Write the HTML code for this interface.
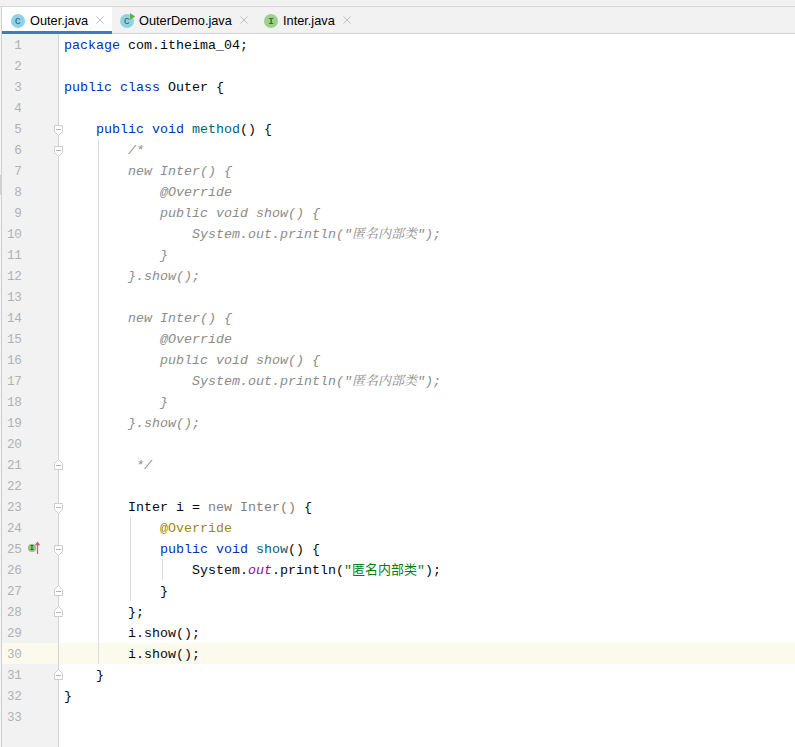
<!DOCTYPE html>
<html lang="zh">
<head>
<meta charset="utf-8">
<title>Outer.java</title>
<style>
html,body{margin:0;padding:0;}
body{width:795px;height:747px;overflow:hidden;background:#fff;position:relative;
  font-family:"Liberation Sans","Noto Sans CJK SC",sans-serif;}
#top{position:absolute;left:0;top:0;width:795px;height:6px;background:#f2f2f2;}
#topline{position:absolute;left:0;top:6px;width:795px;height:1px;background:#d4d4d4;}
#tabs{position:absolute;left:0;top:7px;width:795px;height:26px;background:#f2f2f2;}
#tabline{position:absolute;left:0;top:33px;width:795px;height:1px;background:#d4d4d4;}
#leftedge{position:absolute;left:0;top:7px;width:1px;height:740px;background:#f5f5f5;}
#leftmark{position:absolute;left:0;top:175px;width:1px;height:20px;background:#d2d2d2;}
#leftline{position:absolute;left:1px;top:7px;width:1px;height:740px;background:#cfcfcf;}
.tab{position:absolute;top:0;height:26px;font-size:12.75px;line-height:26px;color:#000;white-space:nowrap;}
.tab.active{background:#fff;left:2px;width:110px;}
.tab.active:after{content:"";position:absolute;left:0;right:0;top:24px;height:3px;background:#3a7cc7;}
.tab svg{position:absolute;top:6px;}
.tab .lbl{position:absolute;top:1px;}
.tab .x{position:absolute;top:9px;width:8px;height:8px;}
#gutter{position:absolute;left:2px;top:34px;width:56px;height:713px;background:#f2f2f2;}
#gutterline{position:absolute;left:58px;top:34px;width:1px;height:713px;background:#d4d4d4;}
#caret{position:absolute;left:2px;top:643px;width:793px;height:21px;background:#fcfaed;}
.ln{position:absolute;left:0;width:21.5px;height:21px;line-height:21px;margin-top:2px;text-align:right;font-family:"Liberation Mono",monospace;font-size:12.6px;letter-spacing:-0.36px;color:#b1b1b1;white-space:pre;}
.cl{position:absolute;left:64px;margin-top:1px;height:21px;line-height:21px;font-family:"Liberation Mono","Noto Sans CJK SC",monospace;font-size:13.3312px;color:#080808;white-space:pre;}
.k{color:#0033b3;}
.m{color:#00627a;}
.c{color:#8c8c8c;font-style:italic;}
.a{color:#9e880d;}
.s{color:#067d17;}
.f{color:#871094;font-style:italic;}
.u{color:#808080;}
.zh{font-family:"Noto Sans CJK SC",sans-serif;font-size:13px;line-height:0;}
.zhc{font-family:"Noto Serif CJK SC",serif;font-size:13px;font-style:italic;line-height:0;}
.guide{position:absolute;width:1px;background:#dcdcdc;}
.fold{position:absolute;left:54px;width:9px;height:11px;}
</style>
</head>
<body>
<div id="top"></div>
<div id="topline"></div>
<div id="tabline"></div>
<div id="tabs">
  <div class="tab active">
    <svg style="left:8px" width="16" height="16" viewBox="0 0 16 16"><circle cx="8" cy="8" r="7" fill="#8fd2e8"/><text x="7.8" y="11.2" text-anchor="middle" font-family="Liberation Sans,sans-serif" font-size="11" fill="#47585f">c</text></svg>
    <span class="lbl" style="left:28px">Outer.java</span>
    <svg class="x" style="left:94px" viewBox="0 0 8 8"><path d="M0.5 0.5L7.5 7.5M7.5 0.5L0.5 7.5" stroke="#bac0c3" stroke-width="1" fill="none"/></svg>
  </div>
  <div class="tab" style="left:112px;width:144px">
    <svg style="left:7px" width="17" height="16" viewBox="0 0 17 16"><circle cx="8" cy="8" r="7" fill="#8fd2e8"/><text x="7.8" y="11.2" text-anchor="middle" font-family="Liberation Sans,sans-serif" font-size="11" fill="#47585f">c</text><path d="M11 0L16.2 3.5L11 7Z" fill="#5fb63c"/></svg>
    <span class="lbl" style="left:27px">OuterDemo.java</span>
    <svg class="x" style="left:128px" viewBox="0 0 8 8"><path d="M0.5 0.5L7.5 7.5M7.5 0.5L0.5 7.5" stroke="#bac0c3" stroke-width="1" fill="none"/></svg>
  </div>
  <div class="tab" style="left:256px;width:110px">
    <svg style="left:7px" width="16" height="16" viewBox="0 0 16 16"><circle cx="8" cy="8" r="7" fill="#9bd288"/><text x="8" y="11" text-anchor="middle" font-family="Liberation Mono,monospace" font-size="9.5" font-weight="bold" fill="#4a6640">I</text></svg>
    <span class="lbl" style="left:27px">Inter.java</span>
    <svg class="x" style="left:87px" viewBox="0 0 8 8"><path d="M0.5 0.5L7.5 7.5M7.5 0.5L0.5 7.5" stroke="#bac0c3" stroke-width="1" fill="none"/></svg>
  </div>
</div>
<div id="leftedge"></div>
<div id="leftmark"></div>
<div id="leftline"></div>
<div id="gutter"></div>
<div id="caret"></div>
<div id="gutterline"></div>
<div id="code">
<div class="ln" style="top:34px">1</div>
<div class="cl" style="top:34px"><span class="k">package</span> com.itheima_04;</div>
<div class="ln" style="top:55px">2</div>
<div class="ln" style="top:76px">3</div>
<div class="cl" style="top:76px"><span class="k">public class</span> Outer {</div>
<div class="ln" style="top:97px">4</div>
<div class="ln" style="top:118px">5</div>
<div class="cl" style="top:118px">    <span class="k">public void</span> <span class="m">method</span>() {</div>
<div class="ln" style="top:139px">6</div>
<div class="cl" style="top:139px">        <span class="c">/*</span></div>
<div class="ln" style="top:160px">7</div>
<div class="cl" style="top:160px">        <span class="c">new Inter() {</span></div>
<div class="ln" style="top:181px">8</div>
<div class="cl" style="top:181px">        <span class="c">    @Override</span></div>
<div class="ln" style="top:202px">9</div>
<div class="cl" style="top:202px">        <span class="c">    public void show() {</span></div>
<div class="ln" style="top:223px">10</div>
<div class="cl" style="top:223px">        <span class="c">        System.out.println("<span class="zhc">匿名内部类</span>");</span></div>
<div class="ln" style="top:244px">11</div>
<div class="cl" style="top:244px">        <span class="c">    }</span></div>
<div class="ln" style="top:265px">12</div>
<div class="cl" style="top:265px">        <span class="c">}.show();</span></div>
<div class="ln" style="top:286px">13</div>
<div class="ln" style="top:307px">14</div>
<div class="cl" style="top:307px">        <span class="c">new Inter() {</span></div>
<div class="ln" style="top:328px">15</div>
<div class="cl" style="top:328px">        <span class="c">    @Override</span></div>
<div class="ln" style="top:349px">16</div>
<div class="cl" style="top:349px">        <span class="c">    public void show() {</span></div>
<div class="ln" style="top:370px">17</div>
<div class="cl" style="top:370px">        <span class="c">        System.out.println("<span class="zhc">匿名内部类</span>");</span></div>
<div class="ln" style="top:391px">18</div>
<div class="cl" style="top:391px">        <span class="c">    }</span></div>
<div class="ln" style="top:412px">19</div>
<div class="cl" style="top:412px">        <span class="c">}.show();</span></div>
<div class="ln" style="top:433px">20</div>
<div class="ln" style="top:454px">21</div>
<div class="cl" style="top:454px">        <span class="c"> */</span></div>
<div class="ln" style="top:475px">22</div>
<div class="ln" style="top:496px">23</div>
<div class="cl" style="top:496px">        Inter i = <span class="u">new Inter()</span> {</div>
<div class="ln" style="top:517px">24</div>
<div class="cl" style="top:517px">            <span class="a">@Override</span></div>
<div class="ln" style="top:538px">25</div>
<div class="cl" style="top:538px">            <span class="k">public void</span> <span class="m">show</span>() {</div>
<div class="ln" style="top:559px">26</div>
<div class="cl" style="top:559px">                System.<span class="f">out</span>.println(<span class="s">"<span class="zh">匿名内部类</span>"</span>);</div>
<div class="ln" style="top:580px">27</div>
<div class="cl" style="top:580px">            }</div>
<div class="ln" style="top:601px">28</div>
<div class="cl" style="top:601px">        };</div>
<div class="ln" style="top:622px">29</div>
<div class="cl" style="top:622px">        i.show();</div>
<div class="ln" style="top:643px">30</div>
<div class="cl" style="top:643px">        i.show();</div>
<div class="ln" style="top:664px">31</div>
<div class="cl" style="top:664px">    }</div>
<div class="ln" style="top:685px">32</div>
<div class="cl" style="top:685px">}</div>
<div class="ln" style="top:706px">33</div>
<div class="guide" style="left:98px;top:139px;height:525px"></div>
<div class="guide" style="left:130px;top:517px;height:84px"></div>
<div class="guide" style="left:162px;top:559px;height:21px"></div>
<svg class="fold" style="top:125px" viewBox="0 0 9 11"><path d="M0.5 0.5H8.5V6.5L4.5 10.5L0.5 6.5Z" fill="#fff" stroke="#cdcdcd"/><path d="M2 4.5H7" stroke="#b4b4b4"/></svg>
<svg class="fold" style="top:146px" viewBox="0 0 9 11"><path d="M0.5 0.5H8.5V6.5L4.5 10.5L0.5 6.5Z" fill="#fff" stroke="#cdcdcd"/><path d="M2 4.5H7" stroke="#b4b4b4"/></svg>
<svg class="fold" style="top:503px" viewBox="0 0 9 11"><path d="M0.5 0.5H8.5V6.5L4.5 10.5L0.5 6.5Z" fill="#fff" stroke="#cdcdcd"/><path d="M2 4.5H7" stroke="#b4b4b4"/></svg>
<svg class="fold" style="top:545px" viewBox="0 0 9 11"><path d="M0.5 0.5H8.5V6.5L4.5 10.5L0.5 6.5Z" fill="#fff" stroke="#cdcdcd"/><path d="M2 4.5H7" stroke="#b4b4b4"/></svg>
<svg class="fold" style="top:459px" viewBox="0 0 9 11"><path d="M0.5 10.5H8.5V4.5L4.5 0.5L0.5 4.5Z" fill="#fff" stroke="#cdcdcd"/><path d="M2 6.5H7" stroke="#b4b4b4"/></svg>
<svg class="fold" style="top:585px" viewBox="0 0 9 11"><path d="M0.5 10.5H8.5V4.5L4.5 0.5L0.5 4.5Z" fill="#fff" stroke="#cdcdcd"/><path d="M2 6.5H7" stroke="#b4b4b4"/></svg>
<svg class="fold" style="top:606px" viewBox="0 0 9 11"><path d="M0.5 10.5H8.5V4.5L4.5 0.5L0.5 4.5Z" fill="#fff" stroke="#cdcdcd"/><path d="M2 6.5H7" stroke="#b4b4b4"/></svg>
<svg class="fold" style="top:669px" viewBox="0 0 9 11"><path d="M0.5 10.5H8.5V4.5L4.5 0.5L0.5 4.5Z" fill="#fff" stroke="#cdcdcd"/><path d="M2 6.5H7" stroke="#b4b4b4"/></svg>
<svg style="position:absolute;left:26px;top:538px" width="16" height="21" viewBox="0 0 16 21"><circle cx="6" cy="10" r="4.1" fill="#8dc971"/><text x="6" y="12" text-anchor="middle" font-family="Liberation Mono,monospace" font-size="6.3" font-weight="bold" fill="#35502a">I</text><path d="M11.5 16V5" stroke="#db5860" stroke-width="1.2" fill="none"/><path d="M8.8 7.2L11.5 3.6L14.2 7.2Z" fill="#db5860"/></svg>
</div>
</body>
</html>
